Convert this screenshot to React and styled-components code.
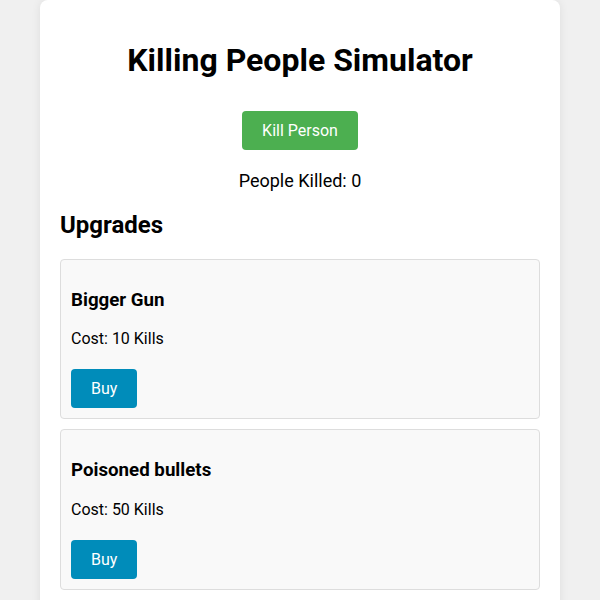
import React, { useState } from 'react';
import styled, { createGlobalStyle } from 'styled-components';

const GlobalStyle = createGlobalStyle`
    body {
        margin: 0;
        background: #f0f0f0;
        font-family: Roboto, 'Liberation Sans', sans-serif;
        color: #000;
    }
`;

const Container = styled.div`
    width: 520px;
    box-sizing: border-box;
    margin: 0 auto;
    padding: 20px;
    background: #fff;
    border-radius: 8px;
    box-shadow: 0 0 10px rgba(0, 0, 0, 0.08);
    text-align: center;
`;

const Title = styled.h1`
    font-size: 32px;
    margin: 21px 0;
`;

const Button = styled.button`
    font-family: inherit;
    font-size: 16px;
    padding: 10px 20px;
    border: none;
    border-radius: 4px;
    color: #fff;
    cursor: pointer;
    background: ${(p) => (p.$variant === 'buy' ? '#008cba' : '#4caf50')};
    margin-top: ${(p) => (p.$variant === 'buy' ? '5px' : '11px')};
`;

const Counter = styled.p`
    font-size: 18px;
    margin: 20px 0 18px;
`;

const SectionTitle = styled.h2`
    font-size: 24px;
    text-align: left;
    margin: 20px 0;
`;

const UpgradeCard = styled.div`
    text-align: left;
    background: #f9f9f9;
    border: 1px solid #ddd;
    border-radius: 4px;
    padding: 10px;
    margin-bottom: 10px;
`;

const UpgradeName = styled.h3`
    font-size: 18.72px;
    margin: 18.72px 0;
`;

const UpgradeCost = styled.p`
    font-size: 16px;
    margin: 16px 0;
`;

const upgrades = [
    { name: 'Bigger Gun', cost: 10 },
    { name: 'Poisoned bullets', cost: 50 },
];

const App = () => {
    const [kills, setKills] = useState(0);

    return (
        <>
            <GlobalStyle />
            <Container>
                <Title>Killing People Simulator</Title>
                <Button onClick={() => setKills(kills + 1)}>Kill Person</Button>
                <Counter>People Killed: {kills}</Counter>
                <SectionTitle>Upgrades</SectionTitle>
                {upgrades.map((u) => (
                    <UpgradeCard key={u.name}>
                        <UpgradeName>{u.name}</UpgradeName>
                        <UpgradeCost>Cost: {u.cost} Kills</UpgradeCost>
                        <Button $variant="buy">Buy</Button>
                    </UpgradeCard>
                ))}
            </Container>
        </>
    );
};

export default App;
